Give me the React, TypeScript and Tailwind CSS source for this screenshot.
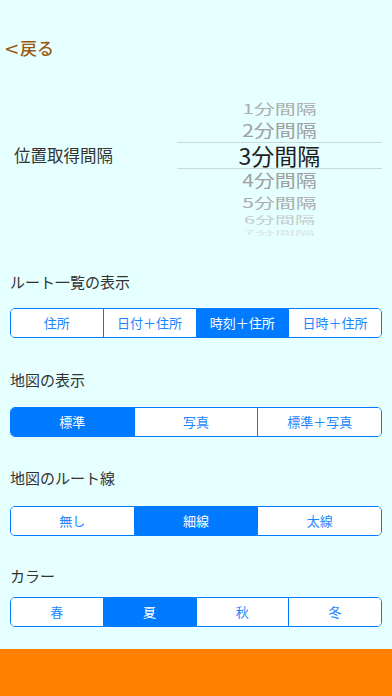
const font = { fontFamily: '"Noto Sans CJK JP", "Noto Sans", sans-serif' };

type Seg = { labels: string[]; selected: number };

function Segmented({ labels, selected }: Seg) {
  return (
    <div className="mx-[10px] flex h-[30px] overflow-hidden rounded-[5px] border border-[#007aff]">
      {labels.map((l, i) => (
        <div
          key={l}
          className={
            "flex flex-1 items-center justify-center text-[13px] " +
            (i > 0 ? "border-l border-[#007aff] " : "") +
            (i === selected ? "bg-[#007aff] text-white" : "bg-white text-[#1a86ff]")
          }
        >
          {l}
        </div>
      ))}
    </div>
  );
}

function Picker() {
  return (
    <div className="mr-[10px] flex w-[205px] flex-col items-center leading-none">
      <div className="flex h-[22px] w-full items-center justify-center text-[21px] text-[#adadad] [transform:scaleY(0.63)]">1分間隔</div>
      <div className="flex h-[23px] w-full items-center justify-center text-[21px] text-[#a0a0a0] [transform:scaleY(0.8)]">2分間隔</div>
      <div className="flex h-[27px] w-full items-center justify-center border-y border-[#c9dada] text-[23px] text-[#1e1e1e]">3分間隔</div>
      <div className="flex h-[23px] w-full items-center justify-center text-[21px] text-[#a0a0a0] [transform:scaleY(0.8)]">4分間隔</div>
      <div className="flex h-[20px] w-full items-center justify-center text-[21px] text-[#adadad] [transform:scaleY(0.63)]">5分間隔</div>
      <div className="flex h-[15px] w-full items-center justify-center text-[20px] text-[#c4cccc] [transform:scaleY(0.5)]">6分間隔</div>
      <div className="flex h-[11px] w-full items-center justify-center text-[20px] text-[#d6e4e4] [transform:scaleY(0.28)]">7分間隔</div>
    </div>
  );
}

export default function App() {
  return (
    <div className="flex h-[696px] w-full flex-col overflow-hidden bg-[#e6ffff]" style={font}>
      <div className="flex items-center pl-[5px] pt-[36px] text-[#9a5a14]">
        <span className="inline-block w-[15px] text-[21px] leading-[24px] [transform:scaleX(1.15)] origin-left">&lt;</span>
        <span className="text-[17px] leading-[24px] font-medium">戻る</span>
      </div>

      <div className="mt-[37px] flex items-start">
        <div className="flex-1 pl-[14px] pt-[46px] text-[16.5px] leading-[24px] text-[#333]">位置取得間隔</div>
        <Picker />
      </div>

      <div className="mt-[34px] pl-[10px] text-[15px] leading-[20px] text-[#333]">ルート一覧の表示</div>
      <div className="mt-[16px]">
        <Segmented labels={["住所", "日付＋住所", "時刻＋住所", "日時＋住所"]} selected={2} />
      </div>

      <div className="mt-[32px] pl-[10px] text-[15px] leading-[20px] text-[#333]">地図の表示</div>
      <div className="mt-[17px]">
        <Segmented labels={["標準", "写真", "標準＋写真"]} selected={0} />
      </div>

      <div className="mt-[31px] pl-[10px] text-[15px] leading-[20px] text-[#333]">地図のルート線</div>
      <div className="mt-[18px]">
        <Segmented labels={["無し", "細線", "太線"]} selected={1} />
      </div>

      <div className="mt-[30px] pl-[10px] text-[15px] leading-[20px] text-[#333]">カラー</div>
      <div className="mt-[11px]">
        <Segmented labels={["春", "夏", "秋", "冬"]} selected={1} />
      </div>

      <div className="mt-auto h-[47px] bg-[#ff7f00]" />
    </div>
  );
}
